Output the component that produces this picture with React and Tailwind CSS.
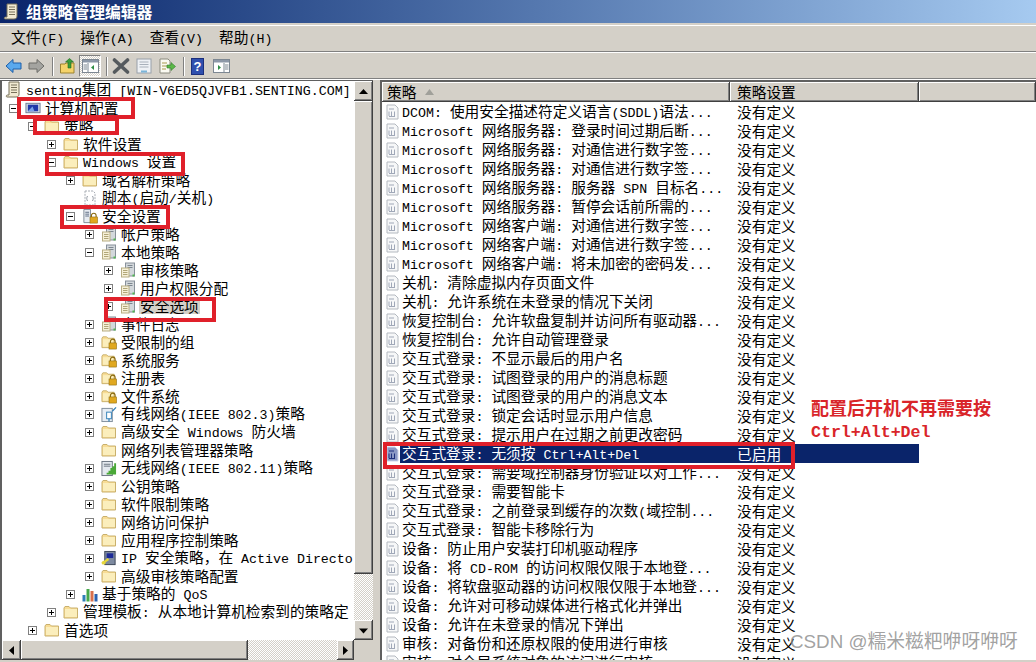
const latin = "font-['Liberation_Mono',monospace] text-[13.3px]";
const cjk = "font-['Noto_Sans_CJK_SC',sans-serif] text-[14.7px]";

// the original mixes a wide bitmap latin with a CJK font, so each run gets its own size
const Txt = ({ children }) => (
  <span className="inline-block whitespace-pre leading-none">
    {children.split(/([\x00-\x7f]+)/).filter(Boolean).map((part, i) => (
      <span key={i} className={/^[\x00-\x7f]/.test(part) ? latin : cjk}>
        {part}
      </span>
    ))}
  </span>
);

const Folder = () => (
  <svg width="16" height="16" viewBox="0 0 16 16">
    <path d="M1 4 L2 2.5 H6 L7.5 4 H14.5 V14 H1 Z" fill="#f8dc95" stroke="#c9b06c" strokeWidth="1" />
    <path d="M2 5 H14 V13 H2 Z" fill="#fbeebc" />
  </svg>
);

const LockBadge = () => (
  <g>
    <path d="M10 9 V7.5 a2.5 2.5 0 0 1 5 0 V9" fill="none" stroke="#8a6a10" strokeWidth="1.2" />
    <rect x="8.5" y="9" width="8" height="6.5" fill="#e0a820" stroke="#8a6a10" strokeWidth="0.6" />
  </g>
);

const LockFolder = () => (
  <svg width="17" height="16" viewBox="0 0 17 16">
    <path d="M1 4 L2 2.5 H6 L7.5 4 H14 V14 H1 Z" fill="#f8dc95" stroke="#c9b06c" />
    <path d="M2 5 H13 V13 H2 Z" fill="#fbeebc" />
    <LockBadge />
  </svg>
);

const SecurePage = () => (
  <svg width="17" height="17" viewBox="0 0 17 17">
    <path d="M2 1 H9 V15 H2 Z" fill="#e8ecf2" stroke="#7d8794" />
    <path d="M3.5 4 H7.5 M3.5 6 H7.5 M3.5 8 H7.5" stroke="#5a6a80" />
    <LockBadge />
  </svg>
);

const PolicyServer = () => (
  <svg width="16" height="16" viewBox="0 0 16 16">
    <rect x="5.5" y="1" width="9" height="13" fill="#d3d8dc" stroke="#87909a" />
    <path d="M7.5 3.5 H12.5 M7.5 5.5 H12.5" stroke="#7c8690" />
    <rect x="1.5" y="6" width="7.5" height="9" fill="#f6f0d8" stroke="#b8ae84" />
    <path d="M3 8.5 H7.5 M3 10.5 H7.5 M3 12.5 H7.5" stroke="#b0a678" />
    <rect x="12.5" y="12.5" width="2" height="2" fill="#4fb84f" />
  </svg>
);

const ScrollIcon = () => (
  <svg width="16" height="18" viewBox="0 0 16 18">
    <path d="M4 1 H14 V13 C14 15 13 16 11 16 H2 C1 16 1 14 2.5 14 H4 Z" fill="#f1ead2" stroke="#77705a" />
    <path d="M6 4 H12 M6 6.5 H12 M6 9 H12 M6 11.5 H12" stroke="#77705a" />
  </svg>
);

const ComputerIcon = () => (
  <svg width="17" height="16" viewBox="0 0 17 16">
    <rect x="1" y="3" width="15" height="10" fill="#d5dbe6" stroke="#6d7a90" />
    <rect x="3" y="4.5" width="11" height="7" fill="#2038a8" />
    <path d="M3 11.5 L8 6.5 L10 11.5 Z" fill="#7aa2e8" />
  </svg>
);

const ScriptIcon = () => (
  <svg width="16" height="16" viewBox="0 0 16 16">
    <path d="M3 1 H11 L13 3 V15 H3 Z" fill="#fff" stroke="#a8adb4" strokeDasharray="2 1" />
    <path d="M5.5 6 C4.5 8 4.5 9 5.5 11 M10.5 6 C11.5 8 11.5 9 10.5 11" fill="none" stroke="#8f96a0" />
  </svg>
);

const WiredIcon = () => (
  <svg width="17" height="17" viewBox="0 0 17 17">
    <rect x="1" y="2" width="11" height="14" fill="#e6edf4" stroke="#7f8c9a" />
    <rect x="6" y="6" width="5" height="7" fill="#fff" stroke="#2f7fb8" />
    <path d="M8.5 13 V16 M12 5 L16 1" stroke="#2f7fb8" strokeWidth="1.3" />
  </svg>
);

const WirelessIcon = () => (
  <svg width="17" height="17" viewBox="0 0 17 17">
    <rect x="1" y="1" width="11" height="15" fill="#e4e9ef" stroke="#66707c" />
    <path d="M3 4 H10 M3 6 H10" stroke="#66707c" />
    <path d="M4 15 H6 V13 H8 V11 H10 V8 H12 V6 H14 V3 H16 V15 Z" fill="#4aa838" />
  </svg>
);

const IpsecIcon = () => (
  <svg width="17" height="17" viewBox="0 0 17 17">
    <rect x="4" y="1" width="11" height="14" fill="#7d8aa0" stroke="#3a4456" />
    <rect x="6" y="3" width="7" height="5" fill="#1c2a98" />
    <path d="M1 14 L8 9" stroke="#e6d73c" strokeWidth="2.4" />
    <circle cx="3" cy="13" r="2" fill="#e6d73c" />
  </svg>
);

const ChartIcon = () => (
  <svg width="16" height="16" viewBox="0 0 16 16">
    <rect x="0.5" y="9" width="3" height="6.5" fill="#2f7fb8" />
    <rect x="4.5" y="3" width="3" height="12.5" fill="#45a84a" />
    <rect x="8.5" y="5" width="3" height="10.5" fill="#d8704c" />
    <rect x="12.5" y="8" width="3" height="7.5" fill="#2a62b0" />
  </svg>
);

const treeIcons = {
  folder: Folder,
  lock: LockFolder,
  secure: SecurePage,
  server: PolicyServer,
  scroll: ScrollIcon,
  computer: ComputerIcon,
  script: ScriptIcon,
  wired: WiredIcon,
  wireless: WirelessIcon,
  ipsec: IpsecIcon,
  chart: ChartIcon,
};

const indents = ["pl-[7px]", "pl-[26px]", "pl-[45px]", "pl-[64px]", "pl-[83px]", "pl-[102px]"];

const tree = [
  { lvl: 0, exp: "-", icon: "computer", text: "计算机配置" },
  { lvl: 1, exp: "-", icon: "folder", text: "策略" },
  { lvl: 2, exp: "+", icon: "folder", text: "软件设置" },
  { lvl: 2, exp: "-", icon: "folder", text: "Windows 设置" },
  { lvl: 3, exp: "+", icon: "folder", text: "域名解析策略" },
  { lvl: 3, exp: "", icon: "script", text: "脚本(启动/关机)" },
  { lvl: 3, exp: "-", icon: "secure", text: "安全设置" },
  { lvl: 4, exp: "+", icon: "server", text: "帐户策略" },
  { lvl: 4, exp: "-", icon: "server", text: "本地策略" },
  { lvl: 5, exp: "+", icon: "server", text: "审核策略" },
  { lvl: 5, exp: "+", icon: "server", text: "用户权限分配" },
  { lvl: 5, exp: "+", icon: "server", text: "安全选项", selected: true },
  { lvl: 4, exp: "+", icon: "server", text: "事件日志" },
  { lvl: 4, exp: "+", icon: "lock", text: "受限制的组" },
  { lvl: 4, exp: "+", icon: "lock", text: "系统服务" },
  { lvl: 4, exp: "+", icon: "lock", text: "注册表" },
  { lvl: 4, exp: "+", icon: "lock", text: "文件系统" },
  { lvl: 4, exp: "+", icon: "wired", text: "有线网络(IEEE 802.3)策略" },
  { lvl: 4, exp: "+", icon: "folder", text: "高级安全 Windows 防火墙" },
  { lvl: 4, exp: "", icon: "folder", text: "网络列表管理器策略" },
  { lvl: 4, exp: "+", icon: "wireless", text: "无线网络(IEEE 802.11)策略" },
  { lvl: 4, exp: "+", icon: "folder", text: "公钥策略" },
  { lvl: 4, exp: "+", icon: "folder", text: "软件限制策略" },
  { lvl: 4, exp: "+", icon: "folder", text: "网络访问保护" },
  { lvl: 4, exp: "+", icon: "folder", text: "应用程序控制策略" },
  { lvl: 4, exp: "+", icon: "ipsec", text: "IP 安全策略，在 Active Directo" },
  { lvl: 4, exp: "+", icon: "folder", text: "高级审核策略配置" },
  { lvl: 3, exp: "+", icon: "chart", text: "基于策略的 QoS" },
  { lvl: 2, exp: "+", icon: "folder", text: "管理模板: 从本地计算机检索到的策略定" },
  { lvl: 1, exp: "+", icon: "folder", text: "首选项" },
];

const policies = [
  "DCOM: 使用安全描述符定义语言(SDDL)语法...",
  "Microsoft 网络服务器: 登录时间过期后断...",
  "Microsoft 网络服务器: 对通信进行数字签...",
  "Microsoft 网络服务器: 对通信进行数字签...",
  "Microsoft 网络服务器: 服务器 SPN 目标名...",
  "Microsoft 网络服务器: 暂停会话前所需的...",
  "Microsoft 网络客户端: 对通信进行数字签...",
  "Microsoft 网络客户端: 对通信进行数字签...",
  "Microsoft 网络客户端: 将未加密的密码发...",
  "关机: 清除虚拟内存页面文件",
  "关机: 允许系统在未登录的情况下关闭",
  "恢复控制台: 允许软盘复制并访问所有驱动器...",
  "恢复控制台: 允许自动管理登录",
  "交互式登录: 不显示最后的用户名",
  "交互式登录: 试图登录的用户的消息标题",
  "交互式登录: 试图登录的用户的消息文本",
  "交互式登录: 锁定会话时显示用户信息",
  "交互式登录: 提示用户在过期之前更改密码",
  "交互式登录: 无须按 Ctrl+Alt+Del",
  "交互式登录: 需要域控制器身份验证以对工作...",
  "交互式登录: 需要智能卡",
  "交互式登录: 之前登录到缓存的次数(域控制...",
  "交互式登录: 智能卡移除行为",
  "设备: 防止用户安装打印机驱动程序",
  "设备: 将 CD-ROM 的访问权限仅限于本地登...",
  "设备: 将软盘驱动器的访问权限仅限于本地登...",
  "设备: 允许对可移动媒体进行格式化并弹出",
  "设备: 允许在未登录的情况下弹出",
  "审核: 对备份和还原权限的使用进行审核",
  "审核: 对全局系统对象的访问进行审核",
];

const raised = "bg-[#d4d0c8] shadow-[inset_-1px_-1px_0_#404040,inset_1px_1px_0_#fff,inset_-2px_-2px_0_#808080]";
const dither = "bg-[repeating-conic-gradient(#d4d0c8_0_25%,#fff_0_50%)] bg-[length:2px_2px]";

const Expander = ({ type }) => (
  <div className="w-[9px] h-[9px] shrink-0 flex items-center justify-center">
    {type && (
      <svg width="9" height="9" viewBox="0 0 9 9">
        <rect x="0.5" y="0.5" width="8" height="8" fill="#fff" stroke="#808080" />
        <path d="M2 4.5 H7" stroke="#000" />
        {type === "+" && <path d="M4.5 2 V7" stroke="#000" />}
      </svg>
    )}
  </div>
);

const TreeRow = ({ row }) => {
  const Icon = treeIcons[row.icon];
  return (
    <div className={`h-[18px] flex items-center ${indents[row.lvl]}`}>
      <Expander type={row.exp} />
      <div className="ml-[7px] w-[16px] shrink-0 flex justify-center">
        <Icon />
      </div>
      <div className={`ml-[3px] px-[1px] flex items-center ${row.selected ? "bg-[#d4d0c8]" : ""}`}>
        <Txt>{row.text}</Txt>
      </div>
    </div>
  );
};

const PolicyIcon = ({ active }) => (
  <svg width="15" height="16" viewBox="0 0 15 16">
    <path d="M2 1 H10 L13 4 V15 H2 Z" fill={active ? "#8a98c4" : "#f6f7f8"} stroke={active ? "#cfd6ea" : "#b4b9c0"} />
    <path d="M4 5 H9 M4 7.5 V12 M6.5 7.5 V12 M9.5 7.5 V12 M4 12.5 H10" stroke={active ? "#1c2f7c" : "#a0a8b8"} />
  </svg>
);

const TriBtn = ({ dir, className }) => (
  <div className={`${raised} flex items-center justify-center ${className}`}>
    <svg width="9" height="9" viewBox="0 0 9 9">
      {dir === "up" && <path d="M4.5 2 L9 7 H0 Z" />}
      {dir === "down" && <path d="M0 2.5 H9 L4.5 7.5 Z" />}
      {dir === "left" && <path d="M7 0 V9 L2 4.5 Z" />}
      {dir === "right" && <path d="M2 0 V9 L7 4.5 Z" />}
    </svg>
  </div>
);

const Sep = () => <div className="w-[2px] h-[19px] border-l border-[#808080] bg-white" />;

const ToolBar = () => (
  <div className="h-[24px] flex items-center pl-[5px] mt-px">
    <svg width="17" height="16" viewBox="0 0 17 16">
      <path d="M1 8 L8 1.5 V5 H16 V11 H8 V14.5 Z" fill="#5aa9ee" stroke="#1f5fa8" />
    </svg>
    <svg className="ml-[6px]" width="17" height="16" viewBox="0 0 17 16">
      <path d="M16 8 L9 1.5 V5 H1 V11 H9 V14.5 Z" fill="#a4a4a0" stroke="#6c6c68" />
    </svg>
    <div className="ml-[7px]"><Sep /></div>
    <svg className="ml-[6px]" width="15" height="16" viewBox="0 0 15 16">
      <path d="M0.5 6 H5 L6 5 H14 V15 H0.5 Z" fill="#f5d36a" stroke="#9c8330" />
      <path d="M8 10 V4 H5.5 L9.5 0.5 L13.5 4 H11 V10 Z" fill="#3a9d3a" stroke="#1f6a1f" strokeWidth="0.6" />
    </svg>
    <div className={`ml-[4px] w-[22px] h-[22px] flex items-center justify-center border border-t-[#808080] border-l-[#808080] border-r-white border-b-white ${dither}`}>
      <svg width="17" height="14" viewBox="0 0 17 14">
        <rect x="0.5" y="0.5" width="16" height="13" fill="#fff" stroke="#7d8792" />
        <rect x="1" y="1" width="15" height="2.5" fill="#8d98a8" />
        <path d="M6 4 V13 M1.5 6 H5 M1.5 8 H5 M1.5 10 H5" stroke="#7d8792" />
        <path d="M12 6 V11 L9 8.5 Z" fill="#2f8d45" />
      </svg>
    </div>
    <div className="ml-[5px]"><Sep /></div>
    <svg className="ml-[4px]" width="18" height="16" viewBox="0 0 18 16">
      <path d="M2.5 2 L15.5 14 M15.5 2 L2.5 14" stroke="#555a5e" strokeWidth="3.6" strokeLinecap="round" />
    </svg>
    <svg className="ml-[6px]" width="16" height="16" viewBox="0 0 16 16">
      <rect x="1" y="1" width="14" height="14" fill="#eef1f5" stroke="#98a0aa" />
      <path d="M3.5 4 H12.5 M3.5 6.5 H12.5 M3.5 9 H12.5" stroke="#a8b0ba" />
      <rect x="5" y="12.5" width="6" height="2" fill="#7ab4d8" />
    </svg>
    <svg className="ml-[7px]" width="17" height="16" viewBox="0 0 17 16">
      <path d="M1 1 H9 L11 3 V15 H1 Z" fill="#fbfaf2" stroke="#8c8c80" />
      <path d="M3 5 H8 M3 8 H8 M3 11 H7" stroke="#a89a50" />
      <path d="M8 7 H12 V4.5 L16.5 8.5 L12 12.5 V10 H8 Z" fill="#5cb848" stroke="#2f7a2a" strokeWidth="0.6" />
    </svg>
    <div className="ml-[7px]"><Sep /></div>
    <div className="ml-[6px] w-[13px] h-[17px] bg-[#2f4fae] border border-[#1c2f7c] flex items-center justify-center text-white text-[13px] font-bold font-['Liberation_Sans',sans-serif] leading-none">
      ?
    </div>
    <svg className="ml-[9px]" width="17" height="14" viewBox="0 0 17 14">
      <rect x="0.5" y="0.5" width="16" height="13" fill="#fff" stroke="#7d8792" />
      <rect x="1" y="1" width="15" height="2.5" fill="#8d98a8" />
      <path d="M11 4 V13 M12 6 H15.5 M12 8 H15.5 M12 10 H15.5" stroke="#7d8792" />
      <path d="M5 6 V11 L8 8.5 Z" fill="#2f8d45" />
    </svg>
  </div>
);

const HeaderCell = ({ className, children }) => (
  <div className={`h-[20px] flex items-center ${raised} ${className}`}>{children}</div>
);

const RedBox = ({ className }) => (
  <div className={`absolute border-[4px] border-[#e0202a] ${className}`} />
);

const App = () => {
  return (
    <div className="relative w-[1036px] h-[662px] overflow-hidden flex flex-col bg-[#d4d0c8] text-black">
      {/* Title bar */}
      <div className="h-[23px] flex items-center pl-[3px] bg-gradient-to-r from-[#0a246a] to-[#a6caf0] shrink-0">
        <ScrollIcon />
        <span className="ml-[7px] text-white text-[15.8px] font-bold leading-none font-['Noto_Sans_CJK_SC',sans-serif]">
          组策略管理编辑器
        </span>
      </div>

      {/* Menu */}
      <div className="mt-[2px] h-[26px] flex items-center pl-[11px] pb-[2px] gap-[16px] border-t border-white shrink-0">
        <Txt>文件(F)</Txt>
        <Txt>操作(A)</Txt>
        <Txt>查看(V)</Txt>
        <Txt>帮助(H)</Txt>
      </div>
      <div className="h-[2px] border-t border-[#808080] bg-white shrink-0" />

      <ToolBar />
      <div className="h-[2px] border-t border-[#808080] bg-white shrink-0" />

      {/* Panes */}
      <div className="flex-1 min-h-0 flex pb-[2px]">
        <div className="w-[373px] flex flex-col border-l-2 border-t border-[#606060] bg-white shrink-0">
          <div className="flex-1 min-h-0 flex">
            <div className="flex-1 min-w-0 overflow-hidden">
              <div className="h-[18px] flex items-center pl-[3px]">
                <ScrollIcon />
                <div className="ml-[5px] flex items-center">
                  <Txt>senting集团 [WIN-V6ED5QJVFB1.SENTING.COM]</Txt>
                </div>
              </div>
              {tree.map((row, i) => (
                <TreeRow key={i} row={row} />
              ))}
            </div>
            <div className="w-[19px] flex flex-col shrink-0">
              <TriBtn dir="up" className="h-[20px]" />
              <div className={`h-[473px] ${raised}`} />
              <div className={`flex-1 ${dither}`} />
              <TriBtn dir="down" className="h-[20px]" />
            </div>
          </div>
          <div className="h-[20px] flex shrink-0">
            <TriBtn dir="left" className="w-[19px]" />
            <div className={`w-[227px] ${raised}`} />
            <div className={`w-[89px] ${dither}`} />
            <TriBtn dir="right" className="w-[17px]" />
            <div className="flex-1 bg-[#d4d0c8]" />
          </div>
        </div>

        <div className="w-[7px] shrink-0" />

        <div className="flex-1 min-w-0 overflow-hidden border-l-2 border-t-2 border-[#606060] bg-white">
          <div className="flex">
            <HeaderCell className="w-[348px] pl-[5px]">
              <Txt>策略</Txt>
              <svg className="ml-[9px]" width="9" height="6" viewBox="0 0 9 6">
                <path d="M4.5 0 L9 6 H0 Z" fill="#a0a09a" />
              </svg>
            </HeaderCell>
            <HeaderCell className="w-[189px] pl-[7px]">
              <Txt>策略设置</Txt>
            </HeaderCell>
            <HeaderCell className="flex-1" />
          </div>
          {policies.map((name, i) => {
            const active = i === 18;
            return (
              <div key={i} className="h-[19px] flex items-center pl-[3px]">
                <PolicyIcon active={active} />
                <div className={`w-[519px] flex items-center h-full ${active ? "bg-[#0a246a] text-white" : ""}`}>
                  <div className="w-[336px] pl-[2px] flex items-center">
                    <Txt>{name}</Txt>
                  </div>
                  <div className="pl-[1px] flex items-center">
                    <Txt>{active ? "已启用" : "没有定义"}</Txt>
                  </div>
                </div>
              </div>
            );
          })}
        </div>
      </div>

      {/* Red annotation boxes */}
      <RedBox className="left-[17px] top-[97px] w-[118px] h-[22px]" />
      <RedBox className="left-[33px] top-[117px] w-[86px] h-[18px]" />
      <RedBox className="left-[45px] top-[152px] w-[140px] h-[24px]" />
      <RedBox className="left-[60px] top-[205px] w-[110px] h-[24px]" />
      <RedBox className="left-[104px] top-[297px] w-[112px] h-[25px]" />
      <RedBox className="left-[383px] top-[442px] w-[412px] h-[27px]" />

      <div className="absolute left-[811px] top-[397px] text-[18px] leading-[20px] font-bold text-[#d9252a] font-['Noto_Sans_CJK_SC',sans-serif]">
        配置后开机不再需要按
      </div>
      <div className="absolute left-[811px] top-[423px] text-[16.6px] leading-[20px] font-bold text-[#d9252a] font-['Liberation_Mono',monospace]">
        Ctrl+Alt+Del
      </div>

      {/* Watermark */}
      <div className="absolute left-[790px] top-[631px] text-[18.8px] leading-[22px] text-[#8a8a8a]/80 font-['Liberation_Sans','Noto_Sans_CJK_SC',sans-serif] whitespace-pre">
        CSDN @糯米糍粑咿呀咿呀
      </div>
    </div>
  );
};

export default App;
